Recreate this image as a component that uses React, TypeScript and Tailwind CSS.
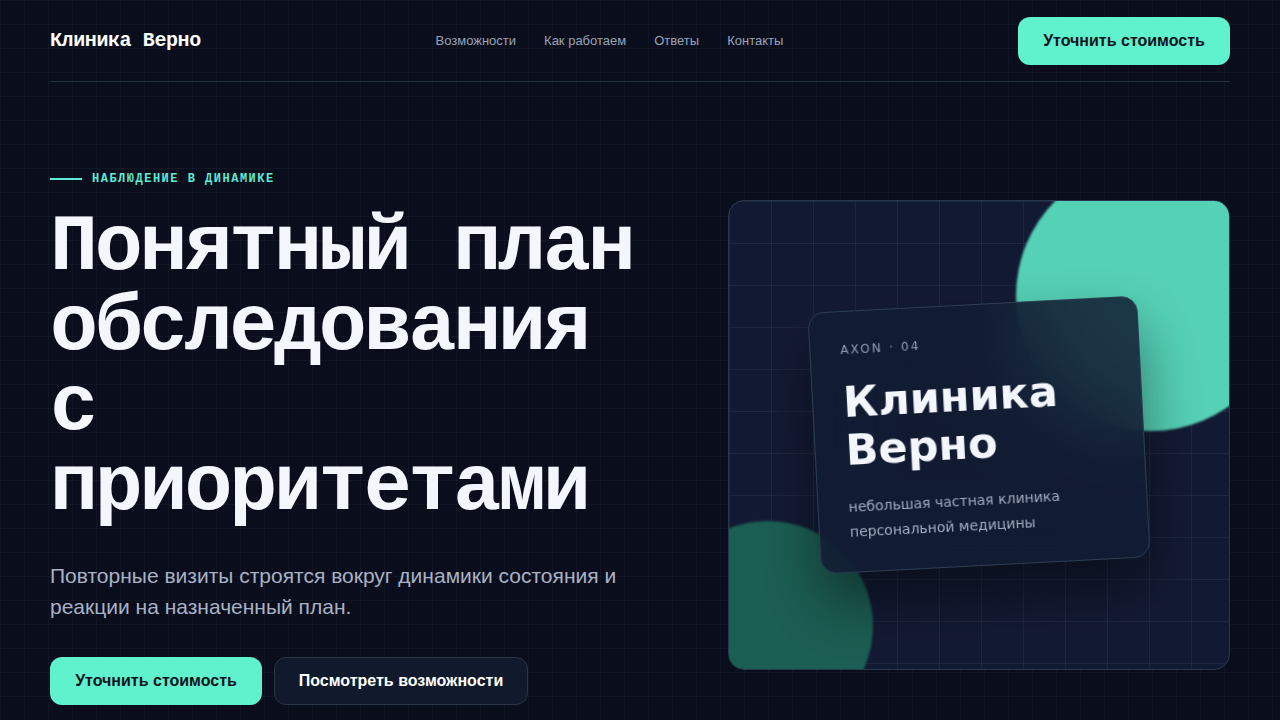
import React from "react";

// --- Header -------------------------------------------------------------------

const NAV = ["Возможности", "Как работаем", "Ответы", "Контакты"];

function Header() {
  return (
    <header className="flex items-center justify-between border-b border-[#1d3440] pt-[17px] pb-[16px]">
      <a className="font-['Liberation_Mono',monospace] text-[20px] font-bold tracking-[-0.02em] text-white">
        Клиника Верно
      </a>
      <nav className="flex items-center gap-7 text-[13px] text-[#9aa4b8]">
        {NAV.map((item) => (
          <a key={item}>{item}</a>
        ))}
      </nav>
      <button className="h-12 w-[212px] rounded-xl bg-[#5ff2cd] text-[16px] font-bold text-[#0b1220]">
        Уточнить стоимость
      </button>
    </header>
  );
}

// --- Visual panel ---------------------------------------------------------------

function VisualPanel() {
  return (
    <div className="relative mt-[29px] h-[470px] overflow-hidden rounded-2xl border border-[#27394b] bg-[#121a33] bg-[linear-gradient(rgba(148,163,184,0.09)_1px,transparent_1px),linear-gradient(90deg,rgba(148,163,184,0.09)_1px,transparent_1px)] bg-[size:42px_42px]">
      {/* decorative blobs */}
      <div className="absolute left-[287px] top-[-40px] h-[270px] w-[270px] rounded-full bg-[#55d2b6] blur-[1px]" />
      <div className="absolute left-[-66px] top-[320px] h-[210px] w-[210px] rounded-full bg-[#1b5e53] blur-[1px]" />

      {/* floating card */}
      <div className="absolute left-1/2 top-1/2 h-[262px] w-[330px] -translate-x-1/2 -translate-y-1/2 -rotate-3 rounded-2xl border border-[#2c3d52] bg-[#111a30]/85 px-[30px] pt-[30px] font-['DejaVu_Sans',sans-serif] shadow-[0_30px_60px_rgba(0,0,0,0.45)] backdrop-blur-2xl">
        <div className="text-[12px] leading-4 tracking-[0.18em] text-[#949fb4]">AXON · 04</div>
        <h2 className="mt-5 text-[43px] font-bold leading-[48px] text-[#f3f6fc]">
          Клиника
          <br />
          Верно
        </h2>
        <p className="mt-[21px] text-[14px] leading-[25px] text-[#a3adc0]">
          небольшая частная клиника
          <br />
          персональной медицины
        </p>
      </div>
    </div>
  );
}

// --- Hero -----------------------------------------------------------------------

function Hero() {
  return (
    <section className="grid grid-cols-[1fr_502px] items-start gap-[78px] pt-[89px]">
      <div>
        <div className="flex items-center gap-[10px]">
          <span className="h-[2px] w-8 bg-[#5eead4]" />
          <span className="font-['Liberation_Mono',monospace] text-[12px] font-bold leading-4 tracking-[0.125em] text-[#5eead4]">
            НАБЛЮДЕНИЕ В ДИНАМИКЕ
          </span>
        </div>
        <h1 className="mt-[21px] font-['Liberation_Mono',monospace] text-[80px] font-bold leading-[80px] tracking-[-0.04em] text-[#f3f6fd]">
          Понятный план обследования с приоритетами
        </h1>
        <p className="mt-8 max-w-[600px] text-[21px] leading-[31px] text-[#a9b2c5]">
          Повторные визиты строятся вокруг динамики состояния и реакции на назначенный план.
        </p>
        <div className="mt-[35px] flex gap-3">
          <button className="h-12 w-[212px] rounded-xl bg-[#5ff2cd] text-[16px] font-bold text-[#0b1220]">
            Уточнить стоимость
          </button>
          <button className="h-12 w-[254px] rounded-xl border border-[#2a3648] bg-[#111a2d] text-[16px] font-bold text-white">
            Посмотреть возможности
          </button>
        </div>
      </div>
      <VisualPanel />
    </section>
  );
}

export default function App() {
  return (
    <div className="min-h-screen overflow-hidden bg-[#0a0e1c] bg-[linear-gradient(rgba(148,163,184,0.05)_1px,transparent_1px),linear-gradient(90deg,rgba(148,163,184,0.05)_1px,transparent_1px)] bg-[size:24px_24px] font-['Liberation_Sans',Arial,sans-serif]">
      <div className="mx-auto w-[1180px]">
        <Header />
        <Hero />
      </div>
    </div>
  );
}
